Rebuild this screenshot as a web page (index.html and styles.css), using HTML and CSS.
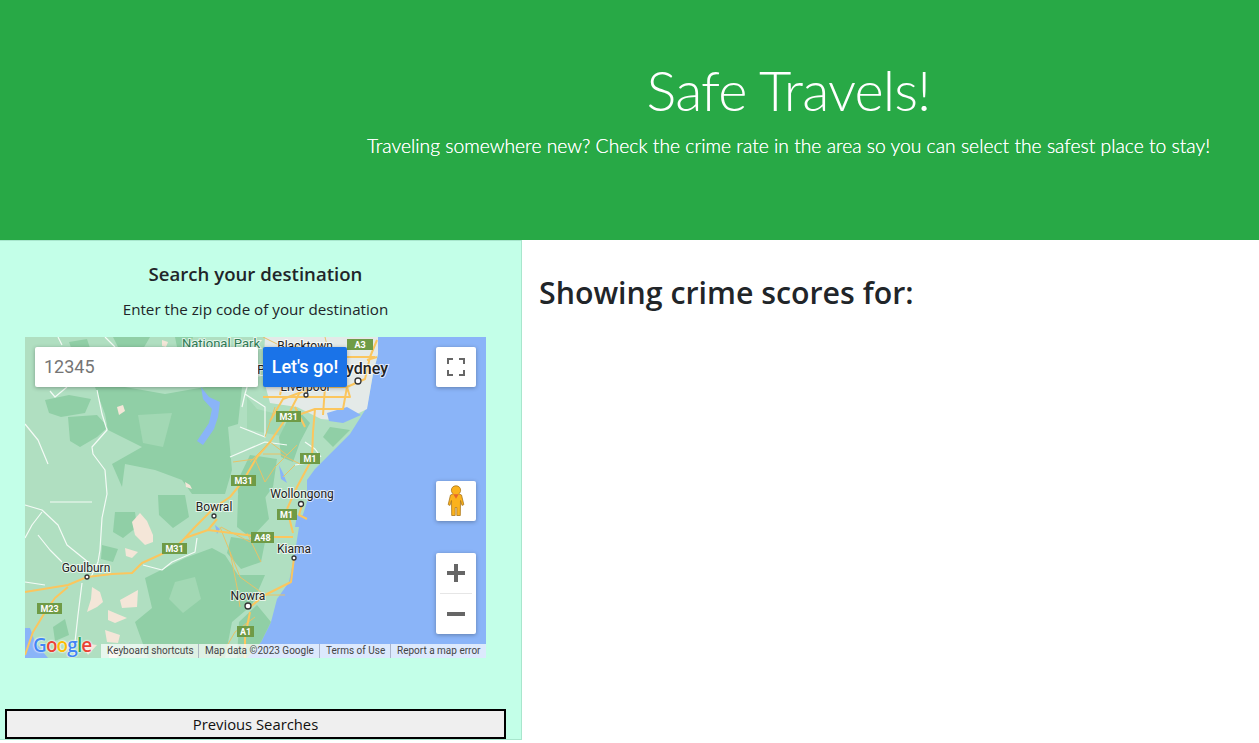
FILE: index.html
```html
<!DOCTYPE html>
<html lang="en">
<head>
  <meta charset="UTF-8">
  <title>Safe Travels!</title>
  <link rel="stylesheet" href="styles.css">
</head>
<body>
  <header class="banner">
    <h1 class="banner-title">Safe Travels!</h1>
    <p class="banner-lead">Traveling somewhere new? Check the crime rate in the area so you can select the safest place to stay!</p>
  </header>

  <div class="content">
    <aside class="sidebar">
      <h5 class="search-title">Search your destination</h5>
      <p class="search-hint">Enter the zip code of your destination</p>

      <div class="map">
        <svg class="map-canvas" viewBox="0 0 461 321" width="461" height="321">
          <rect width="461" height="321" fill="#8ab4f8"/>
          <g class="terrain">
            <path class="land" d="M0 0H353L353 17L348 37L342 70L325 97L302 120L290 132L282 143L282 165L274 190L270 215L264 245L252 262L246 285L236 305L222 321H0Z"/>
            <path class="urban" d="M240 0H353V17L348 37L342 72L318 84L296 82L272 70L245 66L238 40Z"/>
            <path class="water" d="M0 291H5L10 305L23 321H0ZM302 76L322 70L336 78L318 86L304 84Z"/>

            <path class="forest" d="M70 50L100 50L140 57L180 50L217 50L213 87L203 90L207 133L200 157L167 157L157 143L130 133L100 127L97 150L87 127L117 110L83 93L80 77Z"/>
            <path class="forest-soft" d="M113 78L147 76L138 110L118 106Z"/>
            <path class="forest" d="M43 80L72 78L83 90L72 100L55 110L45 104ZM20 63L44 58L66 62L60 76L36 80L24 76Z"/>
            <path class="forest" d="M44 5L62 2L66 14L48 16ZM88 0H125L118 12L96 16ZM150 0H168L164 12L152 10Z"/>
            <path class="forest-soft" d="M222 60L232 72L256 78L262 100L240 96L222 92Z"/>
            <path class="forest" d="M262 84L272 72L285 86L275 105L268 125L256 120L254 100Z"/>
            <path class="forest" d="M305 90L325 93L308 110L298 100Z"/>
            <path class="forest" d="M225 118L252 122L248 150L236 166L214 166L212 145Z"/>

            <path class="forest" d="M120 241L160 221L187 211L200 218L213 238L240 238L227 268L207 285L200 321H123L110 285L127 271Z"/>
            <path class="forest" d="M90 175L110 175L112 190L98 201L88 195ZM77 208L93 212L88 225L76 222ZM133 158L160 158L164 180L148 191L134 178Z"/>
            <path class="forest" d="M213 158L240 158L244 182L226 201L212 190ZM206 200L240 205L236 225L216 232L202 216Z"/>
            <path class="forest" d="M28 290L40 282L44 298L30 304ZM232 268L246 285L236 305L222 321H212L214 285Z"/>
            <path class="forest-soft" d="M150 245L170 240L176 262L158 276L144 262Z"/>

            <path class="sand" d="M107 185L115 176L122 184L128 198L128 205L120 208L110 198Z"/>
            <path class="sand" d="M100 211L113 215L107 221L101 219Z"/>
            <path class="sand" d="M67 250L75 255L78 265L72 270L62 275L66 262Z"/>
            <path class="sand" d="M95 263L113 253L112 270L97 271Z"/>
            <path class="sand" d="M83 273L90 276L102 281L90 286L83 283Z"/>
            <path class="sand" d="M80 293L95 298L93 306L82 305ZM57 306L72 308L63 318ZM84 310L96 312L92 321H84Z"/>
            <path class="sand" d="M137 3L143 5L141 10L137 9ZM92 70L98 68L100 74L94 78ZM160 145L165 148L167 152L161 150Z"/>

            <path class="lake" d="M176 50L184 60L195 65L193 80L189 92L178 108L172 104L184 86L187 72L178 62Z"/>
            <path class="lake" d="M254 128L258 136L262 146L256 142ZM272 178H278L276 190L270 190ZM190 188L195 192L192 197Z"/>

            <path class="road-minor" d="M0 87L13 103L23 127M72 53L77 77L82 93L67 110L68 117L80 133L82 157L77 181L75 213L73 225L66 240M33 0L37 8M80 0L90 10M42 50L30 60L25 54M0 168L17 173L33 188L42 208L63 225M13 198L25 213L37 225M25 165L67 165M17 175L7 188L0 201M118 228L137 233L147 225L170 215L172 201M57 246L53 278L50 305M0 245L20 248"/>
            <path class="road-minor" d="M217 70L220 57L240 70L240 100L215 90M205 120L240 105L262 108M220 57L225 40L240 38M280 105L290 112L296 120M270 128L290 125"/>
            <path class="road-thin" d="M195 190L205 215L215 240L240 258M235 258L260 258M205 215L212 250L215 270M222 196L236 225M230 280L210 295L195 321M196 190L225 205"/>

            <path class="road" d="M0 255L43 248L62 240L87 237L107 236L117 226L150 211L160 201L170 190L190 170L205 160L218 144L232 120L245 105L262 80L275 55"/>
            <path class="road" d="M160 201L183 193L237 200L268 200M183 193L192 182M43 250L30 261L22 272L8 295L0 318M225 275L220 300V321M269 221L266 245L240 258L225 270M262 172L268 196M278 165L274 178L282 182"/>
            <path class="road-thin" d="M238 117L255 117L275 127M225 125L245 105L262 118L272 108M208 125L230 122L240 145L250 130L262 118M258 140L270 128"/>
            <path class="road" d="M288 95L287 122L272 150L262 172"/>
            <path class="road" d="M238 60L325 60L322 50M245 84L258 62L290 50L322 50L318 72L290 72L262 82M255 58L262 25L270 8M278 52L282 20M300 50L298 78M240 45L262 48M322 50L340 42L345 20L352 3M342 23L352 20M305 20H350M290 72L288 95M270 70L280 90"/>
            <path class="road-thin" d="M238 0L262 12L285 6L300 30L290 44L270 30L255 30M300 0L305 20M318 30L322 50M262 40L300 40M250 70L240 100"/>
          </g>

          <g class="shield">
            <rect x="322" y="2" width="26" height="11"/><text x="335" y="11">A3</text>
            <rect x="251" y="74" width="25" height="11"/><text x="263.500" y="83">M31</text>
            <rect x="275" y="116" width="20" height="11"/><text x="285" y="125">M1</text>
            <rect x="206" y="138" width="25" height="11"/><text x="218.500" y="147">M31</text>
            <rect x="252" y="172" width="20" height="11"/><text x="261.500" y="181">M1</text>
            <rect x="226" y="195" width="23" height="11"/><text x="237.500" y="204">A48</text>
            <rect x="137" y="206" width="25" height="11"/><text x="149.500" y="215">M31</text>
            <rect x="12" y="266" width="25" height="11"/><text x="24.500" y="275">M23</text>
            <rect x="212" y="289" width="17" height="11"/><text x="220.500" y="298">A1</text>
          </g>

          <g class="place">
            <text x="196" y="11" class="place-park">National Park</text>
            <text x="280" y="13">Blacktown</text>
            <text x="236" y="37">P</text>
            <text x="277" y="161">Wollongong</text>
            <text x="189" y="174">Bowral</text>
            <text x="269" y="216">Kiama</text>
            <text x="61" y="235">Goulburn</text>
            <text x="223" y="263">Nowra</text>
            <text x="280" y="54">Liverpool</text>
            <text x="363" y="37" class="place-city">ydney</text>
          </g>

          <g class="marker">
            <circle cx="333" cy="44" r="3"/>
            <circle cx="276" cy="167" r="2.500"/>
            <circle cx="189" cy="179" r="2"/>
            <circle cx="269" cy="221" r="2"/>
            <circle cx="62" cy="240" r="2"/>
            <circle cx="223" cy="269" r="3"/>
            <circle cx="281" cy="58" r="2"/>
          </g>
        </svg>

        <input class="map-search" type="text" placeholder="12345">
        <button class="map-go" type="button">Let's go!</button>

        <button class="map-ctrl map-fullscreen" type="button" aria-label="Toggle fullscreen view">
          <svg viewBox="0 0 18 18" width="18" height="18"><path d="M0 6V0H6V2H2V6ZM12 0H18V6H16V2H12ZM0 12H2V16H6V18H0ZM16 12H18V18H12V16H16Z" fill="#666"/></svg>
        </button>

        <button class="map-ctrl map-pegman" type="button" aria-label="Street View">
          <svg viewBox="0 0 18 32" width="18" height="32">
            <path d="M9 0.800C11.900 0.800 13.600 2.900 13.600 5.200C13.600 6.900 12.800 8.100 11.800 8.900L14.500 10L16.800 19.600L15 20.400L13.500 15.500L13.300 30.500H9.800V22.500H8.200V30.500H4.700L4.500 15.500L3 20.400L1.200 19.600L3.500 10L6.200 8.900C5.200 8.100 4.400 6.900 4.400 5.200C4.400 2.900 6.100 0.800 9 0.800Z" fill="#fbb21d" stroke="#a9761c" stroke-width="0.800"/>
            <path d="M6.300 9.300H11.700L9 13.800Z" fill="#e5662a"/>
          </svg>
        </button>

        <div class="map-ctrl map-zoom">
          <button class="zoom-btn" type="button" aria-label="Zoom in">
            <svg viewBox="0 0 18 18" width="18" height="18"><path d="M7 0H11V7H18V11H11V18H7V11H0V7H7Z" fill="#666"/></svg>
          </button>
          <span class="zoom-sep"></span>
          <button class="zoom-btn" type="button" aria-label="Zoom out">
            <svg viewBox="0 0 18 18" width="18" height="18"><path d="M0 7H18V11H0Z" fill="#666"/></svg>
          </button>
        </div>

        <div class="map-logo"><span class="g-blue">G</span><span class="g-red">o</span><span class="g-yellow">o</span><span class="g-blue">g</span><span class="g-green">l</span><span class="g-red">e</span></div>

        <div class="map-credits">
          <span class="credit credit-keys">Keyboard shortcuts</span>
          <span class="credit credit-data">Map data ©2023 Google</span>
          <span class="credit credit-terms">Terms of Use</span>
          <span class="credit credit-report">Report a map error</span>
        </div>
      </div>

      <button class="history-btn" type="button">Previous Searches</button>
    </aside>

    <main class="scores">
      <h2 class="scores-title">Showing crime scores for:</h2>
    </main>
  </div>
</body>
</html>
```

FILE: styles.css
```css
* {
  box-sizing: border-box;
}

body {
  margin: 0;
  font-family: "Open Sans", "Noto Sans", sans-serif;
  color: #212529;
  background-color: #fff;
}

h1, h2, h5, p {
  margin: 0;
}

.banner {
  height: 240px;
  padding: 57px 0 0 318px;
  background-color: #28a946;
  color: #fff;
  text-align: center;
}

.banner-title {
  font-family: "Lato", sans-serif;
  font-size: 56px;
  font-weight: 300;
  line-height: 66px;
  letter-spacing: -0.900px;
}

.banner-lead {
  margin-top: 8px;
  font-family: "Lato", sans-serif;
  font-size: 19.300px;
  font-weight: 300;
  line-height: 30px;
  text-shadow: 0 0 0.500px #fff;
}

.content {
  display: flex;
}

.sidebar {
  display: flex;
  flex-direction: column;
  align-items: center;
  width: 522px;
  height: 500px;
  padding: 0 15px 0 5px;
  background-color: #c3ffe8;
  border: 1px solid #a8e6cd;
  border-left: none;
}

.search-title {
  margin-top: 20px;
  font-size: 18.600px;
  font-weight: 600;
  line-height: 26px;
}

.search-hint {
  margin-top: 10px;
  font-size: 15.200px;
  line-height: 24px;
}

.map {
  position: relative;
  flex: none;
  width: 461px;
  height: 321px;
  margin-top: 16px;
  overflow: hidden;
}

.map-canvas {
  display: block;
}

.terrain {
  filter: blur(0.400px);
}

.land { fill: #b0dfc1; }
.urban { fill: #e4eae8; }
.water, .lake { fill: #8ab4f8; }
.forest { fill: #90cfa6; }
.forest-soft { fill: #a2d8b4; }
.sand { fill: #f4e6d8; }

.road, .road-thin, .road-minor {
  fill: none;
  stroke-linejoin: round;
}

.road {
  stroke: #fbc65e;
  stroke-width: 2;
}

.road-thin {
  stroke: #e8c267;
  stroke-width: 1;
}

.road-minor {
  stroke: #f4fbf6;
  stroke-width: 1.200;
}

.shield rect {
  fill: #6f9b46;
}

.shield text {
  fill: #fff;
  font-family: "Roboto", sans-serif;
  font-size: 9px;
  font-weight: 700;
  text-anchor: middle;
}

.place text {
  fill: #222;
  font-family: "Roboto", sans-serif;
  font-size: 12px;
  text-anchor: middle;
  stroke: #fff;
  stroke-width: 2px;
  stroke-opacity: 0.700;
  paint-order: stroke;
}

.place .place-park {
  fill: #2f7b57;
  font-size: 13px;
}

.place .place-city {
  font-size: 16px;
  font-weight: 500;
  text-anchor: end;
}

.marker circle {
  fill: #fff;
  stroke: #333;
  stroke-width: 1.300;
}

.map-search {
  position: absolute;
  top: 10px;
  left: 10px;
  width: 223px;
  height: 40px;
  padding: 0 9px 2px;
  border: none;
  border-radius: 2px;
  background-color: #fff;
  box-shadow: 0 1px 4px rgba(0, 0, 0, 0.3);
  font-family: "Roboto", sans-serif;
  font-size: 18px;
}

.map-search::placeholder {
  color: #757575;
  opacity: 1;
}

.map-go {
  position: absolute;
  top: 10px;
  left: 238px;
  width: 84px;
  height: 40px;
  padding: 0 0 2px;
  border: none;
  border-radius: 2px;
  background-color: #1a73e8;
  box-shadow: 0 1px 4px rgba(0, 0, 0, 0.3);
  color: #fff;
  font-family: "Roboto", sans-serif;
  font-size: 18px;
  font-weight: 500;
}

.map-ctrl {
  position: absolute;
  left: 411px;
  display: flex;
  align-items: center;
  justify-content: center;
  width: 40px;
  height: 40px;
  padding: 0;
  border: none;
  border-radius: 2px;
  background-color: #fff;
  box-shadow: 0 1px 4px rgba(0, 0, 0, 0.3);
}

.map-fullscreen {
  top: 10px;
}

.map-pegman {
  top: 144px;
}

.map-zoom {
  top: 216px;
  flex-direction: column;
  height: 81px;
}

.zoom-btn {
  display: flex;
  align-items: center;
  justify-content: center;
  flex: 1;
  width: 100%;
  padding: 0;
  border: none;
  background: none;
}

.zoom-sep {
  width: 32px;
  height: 1px;
  background-color: #e6e6e6;
}

.map-logo {
  position: absolute;
  left: 8px;
  bottom: 1px;
  font-family: "Open Sans", sans-serif;
  font-size: 19px;
  font-weight: 600;
  line-height: 24px;
  letter-spacing: -0.900px;
  text-shadow: 0 0 2px #fff, 0 0 2px #fff;
}

.g-blue { color: #4285f4; }
.g-red { color: #ea4335; }
.g-yellow { color: #fbbc05; }
.g-green { color: #34a853; }

.map-credits {
  position: absolute;
  right: 0;
  bottom: 0;
  display: flex;
  height: 14px;
  background-color: rgba(255, 255, 255, 0.7);
  color: #444;
  font-family: "Roboto", sans-serif;
  font-size: 10px;
  line-height: 14px;
}

.credit {
  padding: 0 6px;
  border-right: 1px solid rgba(120, 130, 160, 0.5);
  white-space: nowrap;
}

.credit-keys { width: 98px; }
.credit-data { width: 121px; }
.credit-terms { width: 71px; }
.credit-report { width: 95px; border-right: none; }

.history-btn {
  width: 100%;
  height: 30px;
  margin-top: auto;
  padding: 0 0 1px;
  border: 2px solid #000;
  background-color: #efefef;
  color: #111;
  font-family: "Open Sans", sans-serif;
  font-size: 14.800px;
}

.scores {
  flex: 1;
  padding: 33px 17px;
}

.scores-title {
  font-size: 30.300px;
  font-weight: 600;
  line-height: 40px;
}
```
